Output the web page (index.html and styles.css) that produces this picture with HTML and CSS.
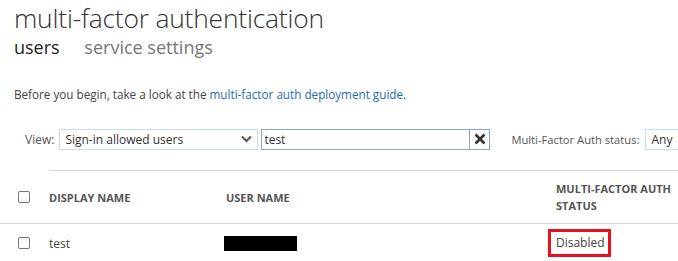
FILE: index.html
```html
<!DOCTYPE html>
<html lang="en">
<head>
    <meta charset="UTF-8">
    <title>multi-factor authentication</title>
    <link rel="stylesheet" href="styles.css">
</head>
<body>
    <h1 class="title">multi-factor authentication</h1>
    <!-- 탭 -->
    <div class="tabs">
        <span class="tab tab_on">users</span>
        <span class="tab">service settings</span>
    </div>

    <p class="intro">Before you begin, take a look at the <a href="#">multi-factor auth deployment guide</a>.</p>

    <!-- 필터 줄 -->
    <div class="filter">
        <label class="lbl">View:</label>
        <div class="sel sel_view">
            <span>Sign-in allowed users</span>
            <svg class="chev" width="11" height="8" viewBox="0 0 11 8"><path d="M1 1.5 L5.5 6 L10 1.5" fill="none" stroke="#555" stroke-width="2"/></svg>
        </div>
        <div class="search">test</div>
        <div class="clear_btn">
            <svg width="12" height="12" viewBox="0 0 12 12"><path d="M1.5 1.5 L10.5 10.5 M10.5 1.5 L1.5 10.5" stroke="#333" stroke-width="2.6"/></svg>
        </div>
        <label class="lbl lbl_status">Multi-Factor Auth status:</label>
        <div class="sel sel_any">Any</div>
    </div>

    <!-- 사용자 표 -->
    <table class="grid">
        <tr class="head">
            <td class="chk_col"><span class="chk"></span></td>
            <th class="c_name">DISPLAY NAME</th>
            <th class="c_user">USER NAME</th>
            <th class="c_status">MULTI-FACTOR AUTH<br>STATUS</th>
        </tr>
        <tr class="row">
            <td class="chk_col"><span class="chk"></span></td>
            <td class="c_name">test</td>
            <td class="c_user"><span class="redact"></span></td>
            <td class="c_status"><span class="mark">Disabled</span></td>
        </tr>
    </table>
</body>
</html>
```

FILE: styles.css
```css
body{
    margin: 0; padding: 0 0 0 14px;
    font-family: "Open Sans", "Noto Sans", sans-serif;
    color: #444; background: #fff;
    overflow: hidden;
}
.title{
    margin: 0; padding-top: 1px;
    font-size: 26.4px; font-weight: 300; color: #333;
    line-height: 34px; letter-spacing: -0.2px;
    white-space: nowrap;
}
.tabs{height: 26px; line-height: 24px; font-size: 18px; white-space: nowrap;}
.tab{color: #777; margin-right: 20px;}
.tab_on{color: #222;}
.intro{margin: 24px 0 0; font-size: 11.7px; line-height: 18px; color: #444; white-space: nowrap;}
.intro a{color: #1f6cb0; text-decoration: none;}

/* 필터 */
.filter{
    display: flex; align-items: center;
    margin-top: 25px; margin-left: 11px; height: 22px;
    font-size: 12px; white-space: nowrap;
}
.filter > *{flex-shrink: 0;}
.lbl{color: #555; margin-right: 5px;}
.lbl_status{margin-left: 21px; margin-right: 6px; font-size: 11.2px;}
.sel{
    box-sizing: border-box; height: 21px;
    border: 1px solid #c6dcef; padding: 0 5px;
    display: flex; align-items: center; color: #333;
}
.sel_view{width: 199px; justify-content: space-between;}
.search{
    box-sizing: border-box; width: 208px; height: 21px;
    margin-left: 3px; padding: 0 2px;
    border: 1px solid #8fa6ba; border-right: 0;
    display: flex; align-items: center; color: #333;
}
.clear_btn{
    box-sizing: border-box; width: 21px; height: 21px;
    border: 1px solid #8fa6ba;
    display: flex; align-items: center; justify-content: center;
}
.sel_any{width: 40px;}

/* 표 */
.grid{
    margin-top: 20px; margin-left: -14px; width: 678px;
    table-layout: fixed;
    border-collapse: collapse; font-size: 11px;
}
.grid th, .grid td{padding: 0; text-align: left; vertical-align: middle;}
.head th, .head td{height: 52px; border-top: 1px solid #d2d6d9; border-bottom: 1px solid #d2d6d9;}
.head .chk_col{border-top: 0;}
.grid th{font-weight: 700; color: #555; font-size: 11px; line-height: 17px;}
.row td{height: 38px; font-size: 12px; color: #444;}
.chk_col{width: 49px; padding-left: 18px !important; box-sizing: border-box;}
.chk{
    display: block; width: 10px; height: 10px;
    border: 1px solid #777; border-radius: 2px;
}
.c_name{width: 177px;}
.c_user{width: 330px;}
.c_status{width: 122px;}
.redact{display: block; width: 73px; height: 15px; background: #000; margin-left: -2px;}
.mark{
    display: inline-block; margin-left: -8px;
    border: 3px solid #e8101f; padding: 3px 3px 4px 5px;
    line-height: 15px;
}
```
